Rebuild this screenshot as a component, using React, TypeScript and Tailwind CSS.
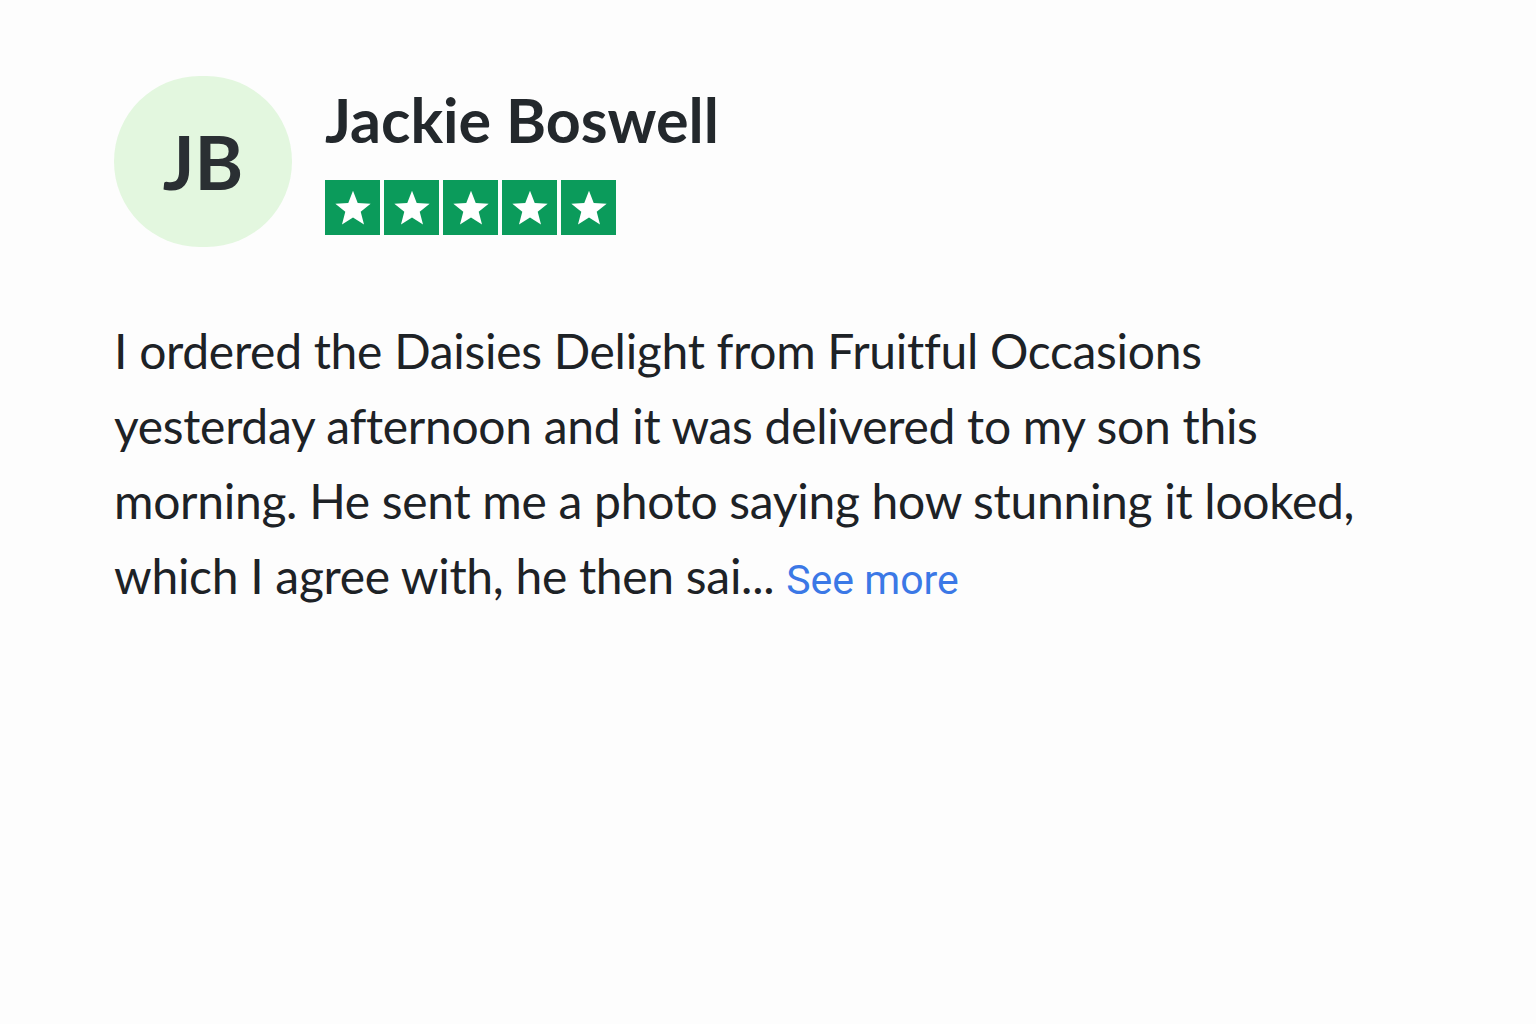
import React from "react";

function Star() {
  return (
    <div className="w-[55px] h-[55px] bg-[#0b9b5b] flex items-center justify-center">
      <svg width="42" height="42" viewBox="0 0 24 24">
        <path
          d="M12 2.2l2.7 6.9 7.4.4-5.7 4.7 1.9 7.2L12 17.4l-6.3 4 1.9-7.2-5.7-4.7 7.4-.4z"
          fill="#ffffff"
        />
      </svg>
    </div>
  );
}

export default function App() {
  return (
    <div className="min-h-screen w-full bg-[#fdfdfd] pl-[114px] pt-[76px]">
      <div className="flex items-start gap-[33px]">
        <div className="w-[178px] h-[171px] rounded-full bg-[#e3f7df] flex items-center justify-center">
          <span
            className="text-[74px] font-bold text-[#2a2f33] leading-none"
            style={{ fontFamily: "Lato, sans-serif" }}
          >
            JB
          </span>
        </div>
        <div className="flex flex-col pt-[8px]">
          <div
            className="text-[61px] font-bold text-[#23282c] leading-[72px]"
            style={{ fontFamily: "Lato, sans-serif" }}
          >
            Jackie Boswell
          </div>
          <div className="flex gap-[4px] mt-[24px]">
            <Star />
            <Star />
            <Star />
            <Star />
            <Star />
          </div>
        </div>
      </div>
      <p
        className="mt-[66px] text-[48px] leading-[75px] text-[#1d2226] tracking-[-0.3px]"
        style={{ fontFamily: "Lato, sans-serif" }}
      >
        I ordered the Daisies Delight from Fruitful Occasions
        <br />
        yesterday afternoon and it was delivered to my son this
        <br />
        morning. He sent me a photo saying how stunning it looked,
        <br />
        which I agree with, he then sai...{" "}
        <span className="text-[41px] text-[#3b78e6] tracking-normal" style={{ fontFamily: "Roboto, sans-serif" }}>
          See more
        </span>
      </p>
    </div>
  );
}
